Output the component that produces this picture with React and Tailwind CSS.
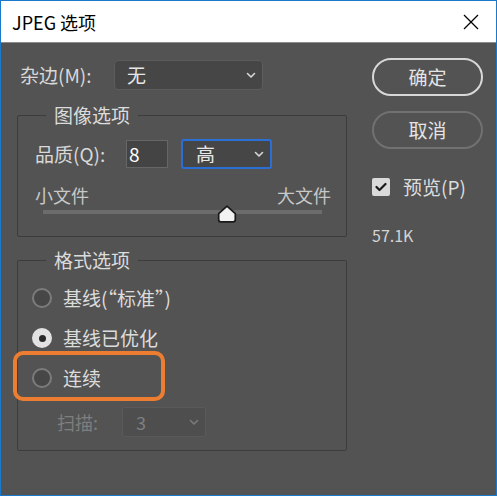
import React from "react";

const font = { fontFamily: '"Noto Sans CJK SC", "Noto Sans", sans-serif' };

function Chevron({ className = "stroke-[#d8d8d8]" }) {
    return (
        <svg width="10" height="7" viewBox="0 0 10 7" className={className} fill="none">
            <polyline points="1.5,1.5 5,5 8.5,1.5" strokeWidth="1.6" strokeLinecap="round" strokeLinejoin="round" />
        </svg>
    );
}

function Radio({ checked }) {
    if (checked) {
        return (
            <div className="w-5 h-5 rounded-full bg-[#e2e2e2] flex items-center justify-center shrink-0">
                <div className="w-[7px] h-[7px] rounded-full bg-[#2a2a2a]"></div>
            </div>
        );
    }
    return <div className="w-5 h-5 rounded-full bg-[#474747] border-2 border-[#7c7c7c] shrink-0"></div>;
}

function Group({ title, children, className = "" }) {
    return (
        <div className={`relative border border-[#3c3c3c] rounded-[2px] ${className}`}>
            <div className="-mt-[13px] ml-[28px] px-2 w-fit bg-[#535353] leading-6 text-[19px] text-[#dcdcdc]">{title}</div>
            {children}
        </div>
    );
}

export default function App() {
    return (
        <div className="w-[497px] h-[496px] border border-[#1979ca] bg-[#535353] flex flex-col overflow-hidden" style={font}>
            {/* title bar */}
            <div className="h-[42px] bg-white border-b border-[#8c8c8c] flex items-center justify-between pl-[11px] pr-[17px] shrink-0">
                <span className="text-[18px] text-black leading-none">JPEG 选项</span>
                <svg width="16" height="16" viewBox="0 0 16 16" className="stroke-black" strokeWidth="1.2">
                    <line x1="1" y1="1" x2="15" y2="15" />
                    <line x1="15" y1="1" x2="1" y2="15" />
                </svg>
            </div>

            <div className="flex pt-[15px] pl-[16px]">
                {/* left column */}
                <div className="w-[330px] shrink-0">
                    <div className="flex items-center mt-[2px] h-[30px]">
                        <span className="w-[97px] pl-[3px] text-[19px] text-[#d8d8d8]">杂边(M):</span>
                        <div className="w-[149px] h-[30px] rounded-[4px] bg-[#464646] border border-[#5c5c5c] flex items-center justify-between pl-[12px] pr-[6px]">
                            <span className="text-[19px] text-[#e6e6e6]">无</span>
                            <Chevron />
                        </div>
                    </div>

                    <Group title="图像选项" className="mt-[25px] pb-[22px]">
                        <div className="flex items-center mt-[12px] pl-[17px] h-[30px]">
                            <span className="w-[91px] text-[19px] text-[#d8d8d8]">品质(Q):</span>
                            <div className="w-[42px] h-[28px] bg-[#444444] border border-[#666666] flex items-center pl-[2px] text-[19px] text-white">8</div>
                            <div className="ml-[13px] w-[91px] h-[30px] rounded-[3px] bg-[#464646] border-2 border-[#2a6fd6] flex items-center justify-between pl-[13px] pr-[6px]">
                                <span className="text-[19px] text-[#e6e6e6]">高</span>
                                <Chevron />
                            </div>
                        </div>
                        <div className="flex justify-between mt-[16px] pl-[17px] pr-[15px] leading-5 text-[18px] text-[#c8c8c8]">
                            <span>小文件</span>
                            <span>大文件</span>
                        </div>
                        <div className="relative mt-[5px] ml-[25px] mr-[24px] h-[4px] bg-[#6c6c6c]">
                            <svg width="20" height="18" viewBox="0 0 20 18" className="absolute -top-[5px] left-[66%] -translate-x-1/2">
                                <path d="M10 1.2 L18.3 8.6 V14.8 Q18.3 16.8 16.3 16.8 H3.7 Q1.7 16.8 1.7 14.8 V8.6 Z" fill="#f2f2f2" stroke="#1a1a1a" strokeWidth="1.7" strokeLinejoin="round" />
                            </svg>
                        </div>
                    </Group>

                    <Group title="格式选项" className="mt-[23px] pb-[13px]">
                        <div className="mt-[6px] pl-[14px] text-[19px] text-[#dcdcdc]">
                            <div className="h-[40px] flex items-center gap-[11px]">
                                <Radio />
                                <span>基线(“标准”)</span>
                            </div>
                            <div className="h-[40px] flex items-center gap-[11px]">
                                <Radio checked />
                                <span>基线已优化</span>
                            </div>
                            <div className="h-[40px] flex items-center gap-[11px]">
                                <Radio />
                                <span>连续</span>
                            </div>
                        </div>
                        <div className="flex items-center mt-[9px] h-[30px] pl-[39px]">
                            <span className="w-[65px] text-[18px] text-[#7e7e7e]">扫描:</span>
                            <div className="w-[84px] h-[30px] rounded-[3px] bg-[#4e4e4e] border border-[#5a5a5a] flex items-center justify-between pl-[13px] pr-[6px]">
                                <span className="text-[18px] text-[#7e7e7e]">3</span>
                                <Chevron className="stroke-[#7a7a7a]" />
                            </div>
                        </div>
                        <div className="absolute left-[-5px] top-[90px] w-[152px] h-[50px] border-4 border-[#ed7d31] rounded-[10px]"></div>
                    </Group>
                </div>

                {/* right column */}
                <div className="ml-[25px] w-[111px] flex flex-col">
                    <button className="h-[38px] rounded-full border-2 border-[#d8d8d8] text-[19px] text-[#e4e4e4]">确定</button>
                    <button className="mt-[15px] h-[38px] rounded-full border-2 border-[#717171] text-[19px] text-[#e4e4e4]">取消</button>
                    <div className="mt-[28px] h-[20px] flex items-center gap-[13px]">
                        <div className="w-[18px] h-[18px] rounded-[2px] bg-[#dadada] flex items-center justify-center">
                            <svg width="12" height="10" viewBox="0 0 12 10" fill="none" stroke="#1a1a1a" strokeWidth="2.2" strokeLinecap="round" strokeLinejoin="round">
                                <polyline points="1.5,5 4.5,8 10.5,2" />
                            </svg>
                        </div>
                        <span className="leading-5 text-[19px] text-[#dcdcdc]">预览(P)</span>
                    </div>
                    <span className="mt-[28px] leading-5 text-[16px] text-[#d4d4d4]">57.1K</span>
                </div>
            </div>
        </div>
    );
}
